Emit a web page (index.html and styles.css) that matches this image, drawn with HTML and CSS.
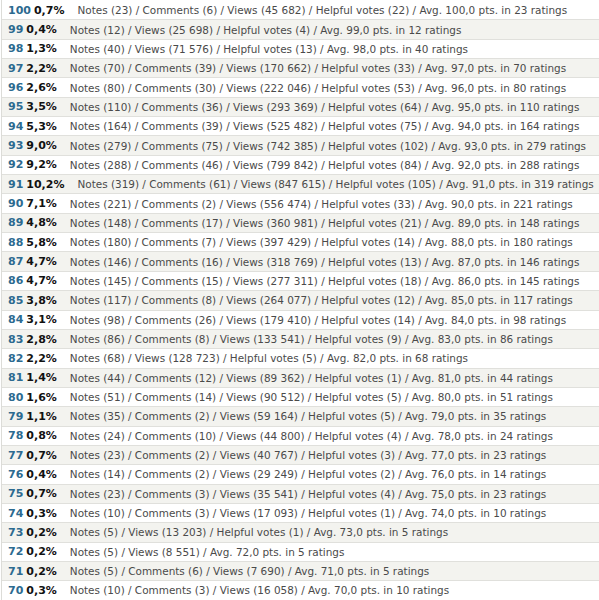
FILE: index.html
```html
<!DOCTYPE html>
<html lang="en">
<head>
    <meta charset="UTF-8">
    <meta name="viewport" content="width=device-width, initial-scale=1.0">
    <title>Rating distribution</title>
    <link rel="stylesheet" href="styles.css">
</head>
<body>
    <!-- Rating distribution -->
    <div class="ratings">
        <div class="row"><b class="grade">100</b><b class="share">0,7%</b><span class="info">Notes (23) / Comments (6) / Views (45 682) / Helpful votes (22) / Avg. 100,0 pts. in 23 ratings</span></div>
        <div class="row"><b class="grade">99</b><b class="share">0,4%</b><span class="info">Notes (12) / Views (25 698) / Helpful votes (4) / Avg. 99,0 pts. in 12 ratings</span></div>
        <div class="row"><b class="grade">98</b><b class="share">1,3%</b><span class="info">Notes (40) / Views (71 576) / Helpful votes (13) / Avg. 98,0 pts. in 40 ratings</span></div>
        <div class="row"><b class="grade">97</b><b class="share">2,2%</b><span class="info">Notes (70) / Comments (39) / Views (170 662) / Helpful votes (33) / Avg. 97,0 pts. in 70 ratings</span></div>
        <div class="row"><b class="grade">96</b><b class="share">2,6%</b><span class="info">Notes (80) / Comments (30) / Views (222 046) / Helpful votes (53) / Avg. 96,0 pts. in 80 ratings</span></div>
        <div class="row"><b class="grade">95</b><b class="share">3,5%</b><span class="info">Notes (110) / Comments (36) / Views (293 369) / Helpful votes (64) / Avg. 95,0 pts. in 110 ratings</span></div>
        <div class="row"><b class="grade">94</b><b class="share">5,3%</b><span class="info">Notes (164) / Comments (39) / Views (525 482) / Helpful votes (75) / Avg. 94,0 pts. in 164 ratings</span></div>
        <div class="row"><b class="grade">93</b><b class="share">9,0%</b><span class="info">Notes (279) / Comments (75) / Views (742 385) / Helpful votes (102) / Avg. 93,0 pts. in 279 ratings</span></div>
        <div class="row"><b class="grade">92</b><b class="share">9,2%</b><span class="info">Notes (288) / Comments (46) / Views (799 842) / Helpful votes (84) / Avg. 92,0 pts. in 288 ratings</span></div>
        <div class="row"><b class="grade">91</b><b class="share">10,2%</b><span class="info">Notes (319) / Comments (61) / Views (847 615) / Helpful votes (105) / Avg. 91,0 pts. in 319 ratings</span></div>
        <div class="row"><b class="grade">90</b><b class="share">7,1%</b><span class="info">Notes (221) / Comments (2) / Views (556 474) / Helpful votes (33) / Avg. 90,0 pts. in 221 ratings</span></div>
        <div class="row"><b class="grade">89</b><b class="share">4,8%</b><span class="info">Notes (148) / Comments (17) / Views (360 981) / Helpful votes (21) / Avg. 89,0 pts. in 148 ratings</span></div>
        <div class="row"><b class="grade">88</b><b class="share">5,8%</b><span class="info">Notes (180) / Comments (7) / Views (397 429) / Helpful votes (14) / Avg. 88,0 pts. in 180 ratings</span></div>
        <div class="row"><b class="grade">87</b><b class="share">4,7%</b><span class="info">Notes (146) / Comments (16) / Views (318 769) / Helpful votes (13) / Avg. 87,0 pts. in 146 ratings</span></div>
        <div class="row"><b class="grade">86</b><b class="share">4,7%</b><span class="info">Notes (145) / Comments (15) / Views (277 311) / Helpful votes (18) / Avg. 86,0 pts. in 145 ratings</span></div>
        <div class="row"><b class="grade">85</b><b class="share">3,8%</b><span class="info">Notes (117) / Comments (8) / Views (264 077) / Helpful votes (12) / Avg. 85,0 pts. in 117 ratings</span></div>
        <div class="row"><b class="grade">84</b><b class="share">3,1%</b><span class="info">Notes (98) / Comments (26) / Views (179 410) / Helpful votes (14) / Avg. 84,0 pts. in 98 ratings</span></div>
        <div class="row"><b class="grade">83</b><b class="share">2,8%</b><span class="info">Notes (86) / Comments (8) / Views (133 541) / Helpful votes (9) / Avg. 83,0 pts. in 86 ratings</span></div>
        <div class="row"><b class="grade">82</b><b class="share">2,2%</b><span class="info">Notes (68) / Views (128 723) / Helpful votes (5) / Avg. 82,0 pts. in 68 ratings</span></div>
        <div class="row"><b class="grade">81</b><b class="share">1,4%</b><span class="info">Notes (44) / Comments (12) / Views (89 362) / Helpful votes (1) / Avg. 81,0 pts. in 44 ratings</span></div>
        <div class="row"><b class="grade">80</b><b class="share">1,6%</b><span class="info">Notes (51) / Comments (14) / Views (90 512) / Helpful votes (5) / Avg. 80,0 pts. in 51 ratings</span></div>
        <div class="row"><b class="grade">79</b><b class="share">1,1%</b><span class="info">Notes (35) / Comments (2) / Views (59 164) / Helpful votes (5) / Avg. 79,0 pts. in 35 ratings</span></div>
        <div class="row"><b class="grade">78</b><b class="share">0,8%</b><span class="info">Notes (24) / Comments (10) / Views (44 800) / Helpful votes (4) / Avg. 78,0 pts. in 24 ratings</span></div>
        <div class="row"><b class="grade">77</b><b class="share">0,7%</b><span class="info">Notes (23) / Comments (2) / Views (40 767) / Helpful votes (3) / Avg. 77,0 pts. in 23 ratings</span></div>
        <div class="row"><b class="grade">76</b><b class="share">0,4%</b><span class="info">Notes (14) / Comments (2) / Views (29 249) / Helpful votes (2) / Avg. 76,0 pts. in 14 ratings</span></div>
        <div class="row"><b class="grade">75</b><b class="share">0,7%</b><span class="info">Notes (23) / Comments (3) / Views (35 541) / Helpful votes (4) / Avg. 75,0 pts. in 23 ratings</span></div>
        <div class="row"><b class="grade">74</b><b class="share">0,3%</b><span class="info">Notes (10) / Comments (3) / Views (17 093) / Helpful votes (1) / Avg. 74,0 pts. in 10 ratings</span></div>
        <div class="row"><b class="grade">73</b><b class="share">0,2%</b><span class="info">Notes (5) / Views (13 203) / Helpful votes (1) / Avg. 73,0 pts. in 5 ratings</span></div>
        <div class="row"><b class="grade">72</b><b class="share">0,2%</b><span class="info">Notes (5) / Views (8 551) / Avg. 72,0 pts. in 5 ratings</span></div>
        <div class="row"><b class="grade">71</b><b class="share">0,2%</b><span class="info">Notes (5) / Comments (6) / Views (7 690) / Avg. 71,0 pts. in 5 ratings</span></div>
        <div class="row"><b class="grade">70</b><b class="share">0,3%</b><span class="info">Notes (10) / Comments (3) / Views (16 058) / Avg. 70,0 pts. in 10 ratings</span></div>
    </div>
    <div class="page-edge"></div>
</body>
</html>
```

FILE: styles.css
```css
body {
    font-family: 'DejaVu Sans', Verdana, sans-serif;
    margin: 0;
    padding: 0;
    background-color: #fff;
    color: #4a4a4a;
    overflow: hidden;
}

/* Rating distribution */
.ratings {
    margin-left: 1px;
    padding-top: 1px;
    border-left: 1px solid #dcdcd8;
}

.row {
    display: flex;
    align-items: center;
    box-sizing: border-box;
    height: 19.35px;
    padding-left: 6px;
    border-bottom: 1px solid #e0e0dc;
    white-space: nowrap;
}

.row:nth-child(even) {
    background-color: #f3f3ef;
}

.grade {
    color: #2c6a90;
    font-size: 11px;
    margin-right: 3px;
}

.share {
    color: #111;
    font-size: 11px;
    margin-right: 13px;
}

.info {
    font-size: 10.45px;
}

.page-edge {
    width: 575px;
    height: 3px;
    background-color: #333;
}
```
